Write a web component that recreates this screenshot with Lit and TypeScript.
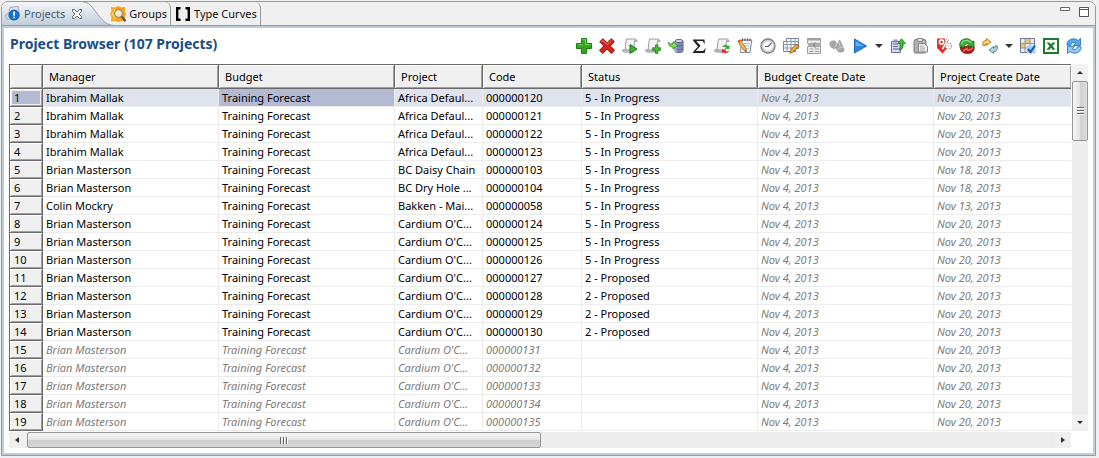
import { LitElement, html, css, svg } from "lit";
import { customElement } from "lit/decorators.js";
import { classMap } from "lit/directives/class-map.js";

const scroll = svg`
  <path d="M4.500 1h9q1.500.5 1.500 2.500h-2.500l-1 9H3l1-9z" fill="#f1f3f5" stroke="#9a9da1"/>
  <path d="M.6 12h9.900q1 .2 1 2H2.500q-1.700 0-1.900-2z" fill="#d4d7da" stroke="#8d9094"/>
  <path d="M12.500 3.500V2q1-1 2 1v.5z" fill="#bfc3c7" stroke="#9a9da1" stroke-width=".6"/>`;

const icons: Record<string, unknown> = {
  add: svg`<path d="M5.500.5h5v5h5v5h-5v5h-5v-5h-5v-5h5z" fill="#31a51f" stroke="#1b7c12"/>
    <path d="M6.500 1.700h3v4.800h4.800M1.700 6.700h4.800" fill="none" stroke="#7ed36c"/>`,
  remove: svg`<path d="M.7 3.800 4 .7l4 4 4.300-4L15.300 3.600 11.300 7.800 15.500 12.300 12.300 15.500 8 11 3.700 15.500.5 12.300 4.800 8z" fill="#d3251c" stroke="#9c100c"/>
    <path d="M2.500 3.800 4 2.500l4 4 4.200-4" fill="none" stroke="#f07a6c"/>`,
  run: svg`${scroll}<path d="M8 6.500 15 11l-7 4.500z" fill="#3cb133" stroke="#197615"/>`,
  addDoc: svg`${scroll}<path d="M10.500 7h2.500v2.800h2.700v2.500H13v3h-2.500v-3H7.700V9.800h2.800z" fill="#49bb38" stroke="#197615" stroke-width=".8"/>`,
  database: svg`<path d="M7 3v10c0 2.200 8 2.200 8 0V3z" fill="#8288b8" stroke="#60659a"/><path d="M8 4.500v9" stroke="#b9bddd" stroke-width="1.500"/><ellipse cx="11" cy="3" rx="4" ry="1.600" fill="#d4d7ee" stroke="#60659a"/>
    <path d="M8 7c0 1.500 6.500 1.500 6.500 0M8 10.500c0 1.500 6.500 1.500 6.500 0" fill="none" stroke="#51568a" stroke-width=".7"/>
    <path d="M.5 4.500Q2 6.500 5 6V3.800L9.500 7.500 5 11V9Q.8 9 .5 4.500z" fill="#8bdc6a" stroke="#2b8f22" stroke-width=".9"/>`,
  sigma: svg`<path d="M2 1.500h11.500l.3 4h-.8C12.500 3.500 12 3 10 3H5.300l4.200 4.700L4.800 13H10.500c2 0 2.700-.6 3.400-2.500h.8L13.700 15H1.800v-.8L7 8.500 2 2.500z" fill="#222"/>`,
  refreshDoc: svg`${scroll}<path d="M8.500 9.500c0-3 4-3.500 5.500-1.500l1.500-1v4h-4l1.200-1.200Q10.500 8 8.500 9.500z" fill="#3aac32"/><path d="M15.500 12.300c-1 3-4 4-6 2L8 15.500v-4h4l-1.300 1.300q2 1.700 4.800-.5z" fill="#d6302a"/>`,
  notes: svg`<path d="M4.500 2h10.300L13 14.500H3.500z" fill="#f1f4f9" stroke="#7e8b9d"/><path d="M7 5.500h6M7 8h5.500M8 10.500h4" stroke="#b7c1d0"/>
    <path d="M5.500 3V.5M8 3V.5M10.500 3V.5M13 3V.5" stroke="#555" stroke-width="1.200"/><path d="M.8 3 3.300 1.700 9 10.500l.3 3.300L6.500 12z" fill="#f7bb43" stroke="#a56a1c" stroke-width=".8"/><path d="M.8 3 3.300 1.700l1 1.600-2.500 1.500z" fill="#df5a4b"/><path d="m7.800 12.800 1.500 1-.1-1.800z" fill="#222"/>`,
  clock: svg`<circle cx="8" cy="8" r="7" fill="#dfe4e9" stroke="#7b7f83" stroke-width="1.300"/><circle cx="8" cy="8" r="5.300" fill="#fafcff" stroke="#b6bdc5" stroke-width=".8"/><path d="M11.500 5 8 8.500H5" fill="none" stroke="#666" stroke-width="1.200"/>`,
  editGrid: svg`<path d="M3.500.5h12v10h-3v3H.5v-10h3z" fill="#fff" stroke="#75859b"/><path d="M.5 6.500h15M.5 10h13M4 3.500v10M8 .5v13M12 .5v12M3.500 3.500h12" fill="none" stroke="#8796ab"/>
    <path d="M13 6.200 15.500 8.500 9.500 14.500 6.800 15.300 7.500 12.200z" fill="#f0aa3a" stroke="#92580e" stroke-width=".8"/>`,
  form: svg`<path d="M1.500.5h13v5h-13zM1.500 8.500h13v7h-13z" fill="#ececec" stroke="#a2a2a2"/><path d="M1 1.500h14" stroke="#a2a2a2" stroke-width="2"/><path d="M3.500 11h4M3.500 13.500h4M9 11h4M9 13.500h4" stroke="#a2a2a2"/><path d="M2 7h13M9.500 4.500 7 7l2.500 2.500" fill="none" stroke="#969696" stroke-width="1.300"/>`,
  binoculars: svg`<path d="M.5 6.500Q0 3 3 3q2-1.500 4 .5l1 2.500 1.500-2Q9 2 11 1.500l4.500 9.500q0 3.500-3.500 3.500-3 .5-4-2l-1-2-1.500.5Q1.500 10.500.5 6.500z" fill="#a6a6a6"/><path d="m10 5 1 3M8 6 6 9M9 11q2-2.500 5-1.500" fill="none" stroke="#d8d8d8"/>`,
  play: svg`<path d="M2.500 1 14.500 8 2.500 15z" fill="#2e86dc" stroke="#1b68bd"/><path d="M3.700 3.300 11.700 8H3.700z" fill="#60b2f2"/>`,
  export: svg`<path d="M1.500 3.500h9v11h-9z" fill="#d7daf0" stroke="#666c9e"/><path d="M3 6h5M3 8.500h5M3 11h6" stroke="#656b9c"/><path d="M3.500 1.500h4v3h-4z" fill="#8b90b8"/>
    <path d="m11.500.8 4 4.700h-2.300v2q0 4-4 4.500 1.200-2 .8-4.500v-2H7.700z" fill="#44bb36" stroke="#187b16" stroke-width=".8"/>`,
  paste: svg`<path d="M3 1.500h8q2 0 2 2v10q0 1.500-2 1.500H3q-2 0-2-1.500v-10q0-2 2-2z" fill="#b1b1b1" stroke="#777"/><path d="M4.500.5h5v3h-5z" fill="#e0e0e0" stroke="#888"/><path d="M5.500 5.500h6l3 3V14h-9z" fill="#ececec" stroke="#858585"/><path d="M7 8h3.500M7 10h5M7 12h5" stroke="#aaa"/>`,
  percent: svg`<path d="M1 .5h8v9h3l-5.500 6L1 10z" fill="#ee2b25"/><g fill="none" stroke="#8f8f8f" stroke-width="2.600"><circle cx="5.500" cy="4" r="2"/><circle cx="12.500" cy="8" r="2"/><path d="M12 1 6.500 11"/></g><g fill="#ee2b25" stroke="#fff" stroke-width="1.400"><circle cx="5.500" cy="4" r="2"/><circle cx="12.500" cy="8" r="2" fill="#ddd"/><path d="M12 1 6.500 11"/></g>`,
  recycle: svg`<path d="M6 8.500 14 7l1.300 2.500q0 5.500-6 6-5 .3-7-2.500L1 9z" fill="#a81f1c" stroke="#6d1010" stroke-width=".8"/><path d="m4 13 4-2.500 1 1.800q3 0 5-2.800" fill="none" stroke="#ee6a5e" stroke-width="1.500"/><path d="M.8 8.500Q0 2 6 .8q5-.8 7 3l2-.8v6L8.500 8l2-1.700Q6 4.500 4.500 9.500z" fill="#3fa838" stroke="#1c6e1b" stroke-width=".8"/><path d="M2.500 6Q4 2 8 2.300q3 .2 4 2.700" fill="none" stroke="#96dc83" stroke-width="1.200"/>`,
  swap: svg`<path d="M.8 7.500Q0 2.500 4.500 2.300V.5L9 4 4.500 7.300V5.500Q3 5.500 3 8z" fill="#f9cf68" stroke="#b5791a" stroke-width=".9"/><path d="M15.200 8q.8 5.500-3.700 5.700v1.800L7 12l4.500-3.500v1.800q1.700 0 1.700-2.500z" fill="#b8d4de" stroke="#477d95" stroke-width=".9"/>`,
  checkGrid: svg`<path d="M.5.5h14v14H.5z" fill="#e6eaf4" stroke="#6d7892"/><path d="M5 1h5v4.500H5zM1 5.500h4V10H1z" fill="#f4c266"/><path d="M.5 5.500h14M.5 10h14M5 .5v14M10 .5v14" stroke="#8b96ae"/><path d="M7 8h8.500v7.500H7z" fill="#a9ccf3"/><path d="m8 11 2.500 3L15 7.500" fill="none" stroke="#1757ae" stroke-width="2"/>`,
  excel: svg`<path d="M1 1h14v14H1z" fill="#fff" stroke="#1d7a2c" stroke-width="2"/><path d="M3.500 4.500h3l1.500 2 1.500-2h3L9.500 8l3 3.700h-3L8 9.700l-1.700 2H3.500l3-3.700z" fill="#1d7a2c"/>`,
  reload: svg`<path d="M.8 7Q1 1.500 7 .8q3-.2 5 1.700l2.500-2v7H7.500l2.300-2.300Q6 3 4.500 7.500z" fill="#55a9ea" stroke="#2069b5" stroke-width=".8"/><path d="M15.200 9q-.2 5.500-6.200 6.200-3 .2-5-1.700l-2.500 2v-7h7L6.200 10.800Q10 13 11.500 8.500z" fill="#8fccf5" stroke="#2069b5" stroke-width=".8"/>`,
  projects: svg`<path d="M5 1.500 13 .5l1.500 10-2 3H2L.5 9 4 7z" fill="#e8ecf4" stroke="#9aa5b8"/><path d="M.8 9.500Q3 7 5 9l1 4.500H2z" fill="#c4cfdf"/><circle cx="9" cy="9" r="5" fill="#1273d1" stroke="#0a55a9"/><path d="M8.200 5.500h1.700v4.200H8.200zM8.200 10.700h1.700v1.600H8.200z" fill="#fff"/>`,
  groups: svg`<path d="M1 1l4 .5L8 0l3 1.500 4-.5v4l1 3-1 3 .5 4.500-4.500-.5-3 1-3-1-4 .5.500-4.500L0 8l1.500-3z" fill="#f9a11f"/><path d="m3 3 2 2-3 3 3 3-1 3" fill="none" stroke="#ffd84a" stroke-width="1.500"/><circle cx="8.500" cy="7.500" r="4" fill="#ffe3a8" stroke="#777"/><circle cx="8.500" cy="7.500" r="2.500" fill="#f3ead0"/><path d="m11.500 10.500 4 4.500" stroke="#555" stroke-width="2"/>`,
  curves: svg`<path d="M5.500 2.200H2.200v11.600h3.300M10.500 2.200h3.300v11.600h-3.300" fill="none" stroke="#000" stroke-width="2.400"/>`,
};

const icon = (name: string) => html`<svg class="icon" viewBox="0 0 16 16" aria-hidden="true">${icons[name]}</svg>`;

const tools: [string, string][] = [
  ["add", "Add"], ["remove", "Delete"], ["run", "Run script"], ["addDoc", "New script"],
  ["database", "Import"], ["sigma", "Totals"], ["refreshDoc", "Refresh script"], ["notes", "Notes"],
  ["clock", "Schedule"], ["editGrid", "Edit grid"], ["form", "Form"], ["binoculars", "Find"],
  ["play", "Start"], ["more", "Start options"], ["export", "Export"], ["paste", "Paste"],
  ["percent", "Percent"], ["recycle", "Recalculate"], ["swap", "Transfer"], ["more", "Transfer options"],
  ["checkGrid", "Choose columns"], ["excel", "Export to Excel"], ["reload", "Reload"],
];

const columns = ["Manager", "Budget", "Project", "Code", "Status", "Budget Create Date", "Project Create Date"];

const project = (manager: string, name: string, code: string, status: string, created = "Nov 20, 2013") =>
  [manager, "Training Forecast", name, "000000" + code, status, "Nov 4, 2013", created];

const rows = [
  ...["120", "121", "122", "123"].map((c) => project("Ibrahim Mallak", "Africa Defaul...", c, "5 - In Progress")),
  project("Brian Masterson", "BC Daisy Chain", "103", "5 - In Progress", "Nov 18, 2013"),
  project("Brian Masterson", "BC Dry Hole ...", "104", "5 - In Progress", "Nov 18, 2013"),
  project("Colin Mockry", "Bakken - Mai...", "058", "5 - In Progress", "Nov 13, 2013"),
  ...["124", "125", "126"].map((c) => project("Brian Masterson", "Cardium O'C...", c, "5 - In Progress")),
  ...["127", "128", "129", "130"].map((c) => project("Brian Masterson", "Cardium O'C...", c, "2 - Proposed")),
  ...["131", "132", "133", "134", "135"].map((c) => project("Brian Masterson", "Cardium O'C...", c, "")),
];

@customElement("tab-strip")
class TabStrip extends LitElement {
  static styles = css`
    :host { display: flex; height: 23px; border-bottom: 1px solid #9a9a9a; background: #f0f0f0; overflow: hidden; border-radius: 6px 6px 0 0; }
    button { font: inherit; color: #111; border: 0; background: none; margin: 0; padding: 0 3px 0 4px; display: flex; align-items: center; gap: 3px; white-space: nowrap; }
    .tabs { display: flex; flex: 1; }
    .icon { width: 16px; height: 16px; flex: none; }
    .active { display: flex; margin-bottom: -1px; background: linear-gradient(#f3f6f9, #bfcdda); height: 24px; }
    .active button { color: #47586c; padding: 0 0 0 3px; }
    .active .close { padding: 0 0 0 6px; }
    .close svg { width: 12px; height: 12px; }
    .curve { width: 32px; height: 24px; flex: none; margin-right: -9px; }
    .tab { border-right: 1px solid #9a9a9a; border-radius: 0 6px 0 0; }
    .window { display: flex; gap: 8px; padding-right: 5px; }
    .window button { padding: 4px 0 0; align-items: flex-start; }
    .window svg { width: 11px; height: 12px; }
  `;
  render() {
    return html`
      <div class="tabs" role="tablist">
        <div class="active">
          <button role="tab" aria-selected="true">${icon("projects")}<span>Projects</span></button>
          <button class="close" aria-label="Close Projects">
            <svg viewBox="0 0 12 12"><path d="M1.500 1.500h2L6 4l2.500-2.500h2v2L8 6l2.500 2.500v2h-2L6 8l-2.500 2.500h-2v-2L4 6 1.500 3.500z" fill="#fff" stroke="#666"/></svg>
          </button>
        </div>
        <svg class="curve" viewBox="0 0 32 24" aria-hidden="true">
          <defs><linearGradient id="g" x2="0" y2="1"><stop stop-color="#f3f6f9"/><stop offset="1" stop-color="#bfcdda"/></linearGradient></defs>
          <path d="M0 0C6 0 8 4 13 10C19 18 23 23.500 32 23.500V24H0z" fill="url(#g)"/>
          <path d="M0 0C6 0 8 4 13 10C19 18 23 23.500 32 23.500" fill="none" stroke="#9a9a9a"/>
        </svg>
        <button class="tab" role="tab" aria-selected="false">${icon("groups")}<span>Groups</span></button>
        <button class="tab" role="tab" aria-selected="false">${icon("curves")}<span>Type Curves</span></button>
      </div>
      <div class="window">
        <button aria-label="Minimize"><svg viewBox="0 0 11 12"><path d="M.5 1.500h9v3h-9z" fill="#fff" stroke="#666"/></svg></button>
        <button aria-label="Maximize"><svg viewBox="0 0 11 12"><path d="M.5 1.500h9v9h-9z" fill="#fff" stroke="#555"/><path d="M.5 3.500h9" stroke="#555"/></svg></button>
      </div>`;
  }
}

@customElement("project-grid")
class ProjectGrid extends LitElement {
  static styles = css`
    :host { display: block; min-width: 0; overflow: hidden; }
    table { width: 100%; table-layout: fixed; border-spacing: 0; border-collapse: separate; border-left: 1px solid #696969; border-top: 1px solid #696969; }
    th, td { box-sizing: border-box; padding: 0 0 0 3px; text-align: left; font-weight: 400; white-space: nowrap; overflow: hidden; }
    thead th { height: 24px; background: #f0f0f0; border-right: 1px solid #696969; border-bottom: 1px solid #696969; padding-left: 6px; box-shadow: inset 1px 1px #fff, inset -1px -1px #a0a0a0; }
    td { height: 18px; line-height: 17px; border-right: 1px solid #ececec; border-bottom: 1px solid #ececec; background: #fff; }
    tbody th { height: 18px; line-height: 17px; padding-left: 4px; background: #f0f0f0; border-right: 1px solid #696969; border-bottom: 1px solid #696969; box-shadow: inset 1px 1px #fff, inset -1px -1px #a0a0a0; }
    thead th:last-child, td:last-child { border-right: 0; }
    .number { width: 33px; }
    .wide { width: 176px; }
    .project { width: 88px; }
    .code { width: 99px; }
    .muted { color: #7c7c7c; font-style: italic; }
    .selected td { background: #dfe3ee; }
    .selected .current, .selected th { background: #b4bad2; }
    .selected th { box-shadow: inset 1px 1px #fff, inset -1px -1px #a0a0a0, inset 2px 2px #f0f0f0, inset -2px -2px #f0f0f0; }
  `;
  render() {
    return html`<table>
      <colgroup><col class="number"><col class="wide"><col class="wide"><col class="project"><col class="code"><col class="wide"><col class="wide"><col></colgroup>
      <thead><tr><th></th>${columns.map((c) => html`<th scope="col">${c}</th>`)}</tr></thead>
      <tbody>${rows.map((row, i) => html`<tr class=${classMap({ selected: i === 0 })}>
        <th scope="row">${i + 1}</th>
        ${row.map((cell, j) => html`<td class=${classMap({ muted: j > 4 || i > 13, current: j === 1 })}>${cell}</td>`)}
      </tr>`)}</tbody>
    </table>`;
  }
}

@customElement("app-root")
class AppRoot extends LitElement {
  static styles = css`
    :host { display: block; box-sizing: border-box; min-height: 100vh; padding: 1px 3px 2px 1px; background: #f0f0f0; font-family: "Noto Sans", "Open Sans", sans-serif; font-size: 11px; line-height: 16px; color: #000; }
    .panel { border: 1px solid #9a9a9a; border-radius: 7px 7px 0 0; }
    .body { border: 2px solid #bfcdda; background: #fff; padding: 0 5px 5px; }
    .heading { display: flex; align-items: center; justify-content: space-between; height: 36px; padding: 0 6px 0 1px; }
    h1 { margin: 0; padding-bottom: 4px; font-size: 14px; line-height: 20px; color: #174f86; white-space: nowrap; }
    .toolbar { display: flex; align-items: center; gap: 7px; }
    .toolbar button { width: 16px; height: 16px; padding: 0; border: 0; background: none; display: flex; align-items: center; justify-content: center; }
    .toolbar .more { width: 8px; }
    .icon { width: 16px; height: 16px; flex: none; }
    .arrow { width: 8px; height: 8px; flex: none; }
    .viewport { display: grid; grid-template-columns: minmax(0, 1fr) 16px; row-gap: 1px; column-gap: 1px; }
    .bar { display: flex; background: #ededed; }
    .bar button { flex: none; width: 16px; height: 16px; padding: 0; border: 0; background: #f0f0f0; display: flex; align-items: center; justify-content: center; }
    .vertical { flex-direction: column; }
    .track { flex: 1; min-width: 0; min-height: 0; padding: 1px 0 0; }
    .horizontal .track { padding: 0 0 0 2px; }
    .thumb { box-sizing: border-box; display: flex; align-items: center; justify-content: center; gap: 1px; border: 1px solid #979797; border-radius: 2px; }
    .vertical .thumb { flex-direction: column; height: 18%; background: linear-gradient(90deg, #f6f6f6, #e4e4e4 50%, #cfcfcf 51%, #dcdcdc); }
    .horizontal .thumb { width: 50%; height: 16px; background: linear-gradient(#f6f6f6, #e4e4e4 50%, #cfcfcf 51%, #d8d8d8); }
    .grip { width: 2px; height: 7px; background: linear-gradient(90deg, #666 50%, #fff 50%); }
    .vertical .grip { width: 7px; height: 2px; background: linear-gradient(#666 50%, #fff 50%); }
  `;
  private arrow(d: string) {
    return html`<svg class="arrow" viewBox="0 0 8 8" aria-hidden="true"><path d=${d} fill="#333"/></svg>`;
  }
  private bar(kind: string, back: string, forward: string) {
    return html`<div class="bar ${kind}">
      <button aria-label="Scroll back">${this.arrow(back)}</button>
      <div class="track"><div class="thumb"><span class="grip"></span><span class="grip"></span><span class="grip"></span></div></div>
      <button aria-label="Scroll forward">${this.arrow(forward)}</button>
    </div>`;
  }
  render() {
    return html`<main class="panel">
      <tab-strip></tab-strip>
      <section class="body">
        <header class="heading">
          <h1>Project Browser (107 Projects)</h1>
          <div class="toolbar" role="toolbar">${tools.map(([name, label]) =>
            name === "more"
              ? html`<button class="more" aria-label=${label}>${this.arrow("M0 2h8L4 6z")}</button>`
              : html`<button aria-label=${label}>${icon(name)}</button>`)}</div>
        </header>
        <div class="viewport">
          <project-grid></project-grid>
          ${this.bar("vertical", "M1 6h6L4 3z", "M1 2h6L4 5z")}
          ${this.bar("horizontal", "M6 1v6L2 4z", "M2 1v6l4-3z")}
        </div>
      </section>
    </main>`;
  }
}
